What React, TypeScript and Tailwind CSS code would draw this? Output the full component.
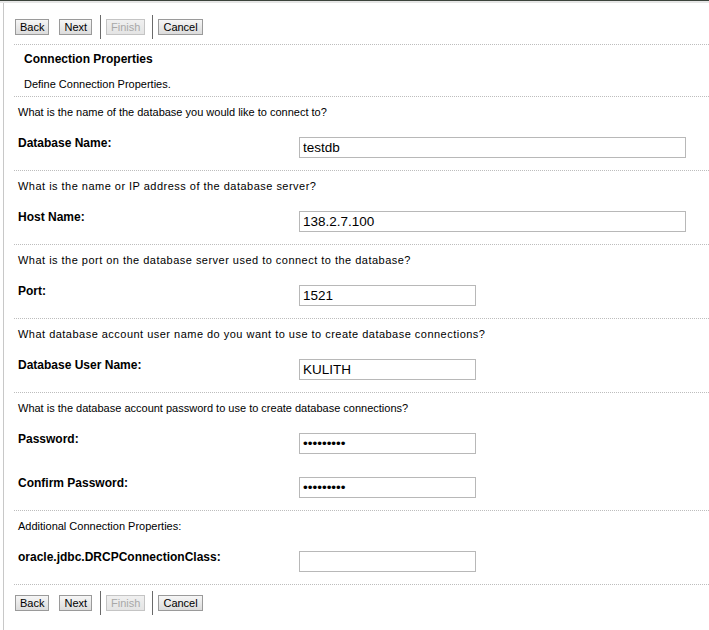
import React from "react";

const font = "font-['Liberation_Sans',Arial,sans-serif]";

function Btn({ label, disabled }: { label: string; disabled?: boolean }) {
  return (
    <button
      type="button"
      disabled={disabled}
      className={
        "mt-[4px] h-[16px] px-[4px] text-[11px] leading-[14px] border bg-gradient-to-b " +
        (disabled
          ? "border-[#c4c4c4] text-[#a8a8a8] from-[#f0f0f0] to-[#e4e4e4]"
          : "border-[#9a9a9a] text-black from-[#f6f6f6] to-[#dcdcdc]")
      }
    >
      {label}
    </button>
  );
}

function Toolbar({ top }: { top: string }) {
  return (
    <div className={"flex items-start pl-[1px] " + top}>
      <Btn label="Back" />
      <div className="ml-[10px]">
        <Btn label="Next" />
      </div>
      <div className="ml-[8px] w-[1px] h-[24px] bg-[#6a6a6a]" />
      <div className="ml-[5px]">
        <Btn label="Finish" disabled />
      </div>
      <div className="ml-[7px] w-[1px] h-[24px] bg-[#6a6a6a]" />
      <div className="ml-[5px]">
        <Btn label="Cancel" />
      </div>
    </div>
  );
}

function Row({
  label,
  value,
  wide,
  type = "text",
  h = "h-[42px]",
}: {
  label: string;
  value: string;
  wide?: boolean;
  type?: string;
  h?: string;
}) {
  return (
    <div className={"flex items-start pl-[4px] " + h}>
      <div className="w-[281px] mt-[8px] leading-[14px] font-bold text-[12px]">{label}</div>
      <input
        type={type}
        readOnly
        value={value}
        className={
          "mt-[9px] h-[21px] border border-[#b8b8b8] bg-white px-[3px] text-[13.5px] text-black outline-none " +
          font +
          (wide ? " w-[387px]" : " w-[177px]")
        }
      />
    </div>
  );
}

function Question({ text, wide }: { text: string; wide?: boolean }) {
  return (
    <div
      className={
        "border-t border-dotted border-[#bdbdbd] h-[32px] flex items-center pl-[4px] text-[11px]" +
        (wide ? " tracking-[0.48px]" : "")
      }
    >
      {text}
    </div>
  );
}

export default function App() {
  return (
    <div className={"min-h-[630px] bg-white text-black text-[12px] " + font}>
      <div className="h-[1px] bg-[#3b433b]" />
      <div className="h-[2px] bg-[#e6e6e6]" />
      <div className="ml-[3px] border-l border-[#c8c8c8] pl-[10px] min-h-[627px]">
        <div className="h-[41px]">
          <Toolbar top="pt-[12px]" />
        </div>
        <div className="border-t border-dotted border-[#bdbdbd] pl-[10px] pt-[7px] pb-[5px]">
          <div className="leading-[14px] font-bold">Connection Properties</div>
          <div className="leading-[14px] mt-[11px] text-[11px]">Define Connection Properties.</div>
        </div>

        <Question text="What is the name of the database you would like to connect to?" />
        <Row label="Database Name:" value="testdb" wide />

        <Question text="What is the name or IP address of the database server?" wide />
        <Row label="Host Name:" value="138.2.7.100" wide />

        <Question text="What is the port on the database server used to connect to the database?" wide />
        <Row label="Port:" value="1521" />

        <Question text="What database account user name do you want to use to create database connections?" wide />
        <Row label="Database User Name:" value="KULITH" />

        <Question text="What is the database account password to use to create database connections?" />
        <Row label="Password:" value="123456789" type="password" h="h-[44px]" />
        <Row label="Confirm Password:" value="123456789" type="password" />

        <Question text="Additional Connection Properties:" />
        <Row label="oracle.jdbc.DRCPConnectionClass:" value="" />

        <div className="border-t border-dotted border-[#bdbdbd]">
          <Toolbar top="pt-[6px]" />
        </div>
      </div>
    </div>
  );
}
